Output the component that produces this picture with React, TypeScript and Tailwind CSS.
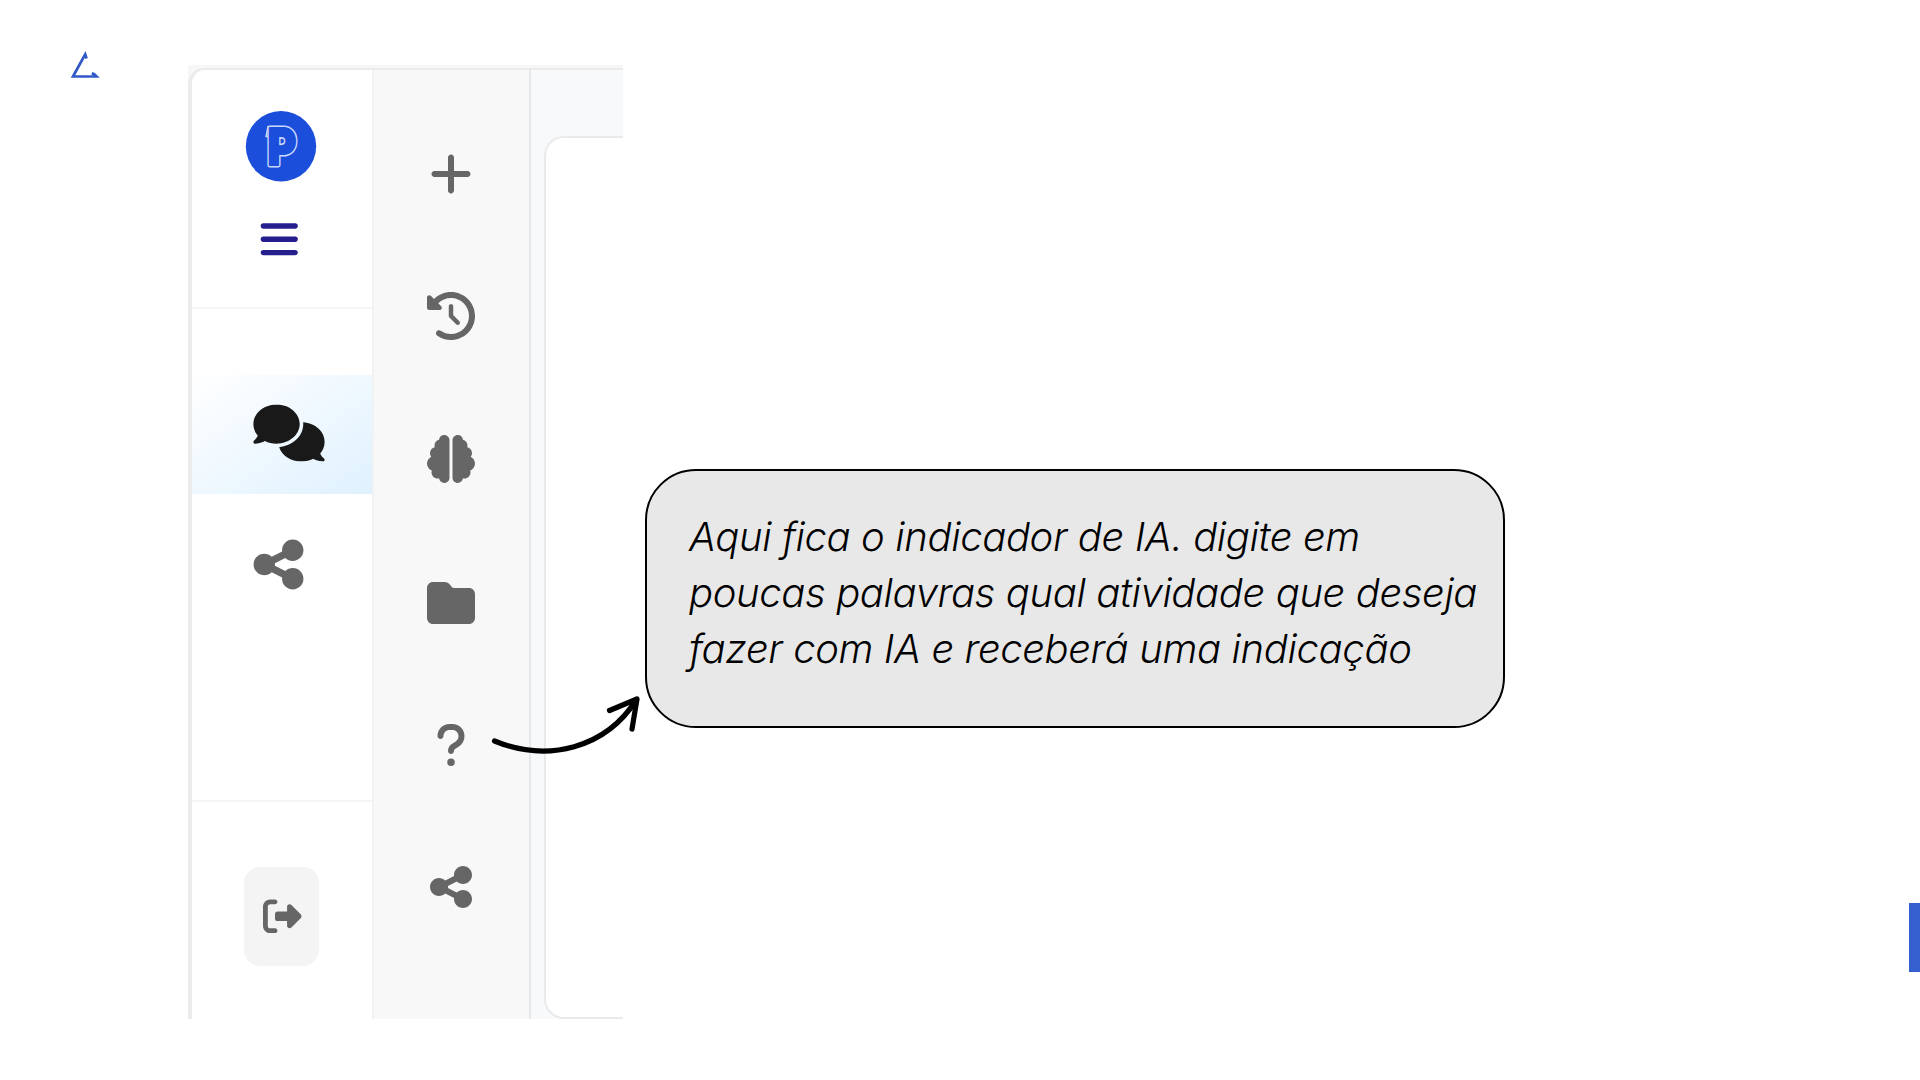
import React from "react";
import {
  FaBars,
  FaBrain,
  FaClockRotateLeft,
  FaComments,
  FaFolder,
  FaPlus,
  FaQuestion,
  FaRightFromBracket,
  FaShareNodes,
} from "react-icons/fa6";

function Triangle() {
  return (
    <svg width="32" height="32" viewBox="0 0 32 32" fill="none" className="ml-[69px] mt-[49px]">
      <path d="M17.6 9.5L16.2 5.4L4 27.5H27.5L25.2 25.2L22.8 24.2" stroke="#3359c9" strokeWidth="2.7" />
    </svg>
  );
}

function Logo() {
  const glyph = {
    transform: "translate(22.4 54.6) scale(0.86 1)",
    fontFamily: "Inter, sans-serif",
    fontWeight: 900,
    fontSize: 51,
    strokeLinejoin: "round" as const,
  };
  return (
    <svg width="72" height="72" viewBox="0 0 72 72" className="mt-[40px] ml-[53px] shrink-0">
      <circle cx="36" cy="36.3" r="35.2" fill="#1b4fdb" />
      <text {...glyph} fill="#1b4fdb" stroke="#c6d6fc" strokeWidth="5.2">
        P
      </text>
      <path d="M23.2 15.9L21.2 26.5H23.6" fill="none" stroke="#c6d6fc" strokeWidth="1.6" />
      <text {...glyph} fill="#1b4fdb" stroke="#1b4fdb" strokeWidth="1.9" aria-hidden="true">
        P
      </text>
    </svg>
  );
}

function PrimarySidebar() {
  return (
    <nav className="flex w-[182px] flex-col rounded-tl-[14px] border-r-2 border-[#f1f2f3] bg-white">
      <div className="flex h-[239px] flex-col border-b-2 border-[#f4f5f6]">
        <Logo />
        <FaBars size={42.5} className="ml-[65.5px] mt-[36px] text-[#241f8c]" />
      </div>
      <div className="mt-[66px] flex h-[119px] items-center bg-linear-to-br from-white to-[#dff1fe] pl-[61px]">
        <FaComments className="h-[57px] w-[72px] -translate-y-[1.5px] text-[#191919]" />
      </div>
      <FaShareNodes size={57} className="ml-[57.5px] mt-[42px] text-[#666666]" />
      <div className="mt-auto flex h-[219px] flex-col border-t-2 border-[#f4f5f6] pl-[52px] pt-[65px]">
        <div className="flex h-[99px] w-[75px] items-center justify-center rounded-[16px] bg-[#f4f4f4] pl-[2px]">
          <FaRightFromBracket size={38.5} className="text-[#666666]" />
        </div>
      </div>
    </nav>
  );
}

function ToolRail() {
  return (
    <nav className="flex w-[157px] flex-col items-center border-r-2 border-[#e6e8eb] bg-[#f8f8f8] pr-[1.5px] pt-[80px] text-[48px] text-[#666666]">
      <FaPlus />
      <FaClockRotateLeft className="mt-[94px]" />
      <FaBrain className="mt-[94.5px]" />
      <FaFolder className="mt-[96px]" />
      <FaQuestion className="mt-[94px]" />
      <FaShareNodes className="mt-[94px]" />
    </nav>
  );
}

export default function App() {
  return (
    <div className="relative flex h-[1080px] w-[1920px] overflow-hidden bg-white">
      <div className="w-[188px] shrink-0">
        <Triangle />
      </div>

      <div className="mt-[65px] flex h-[954px] w-[435px] shrink-0 bg-[#f7f7f7]">
        <div className="mt-[3px] flex grow rounded-tl-[16px] border-l-4 border-t-2 border-[#ebebec]">
          <PrimarySidebar />
          <ToolRail />
          <div className="flex grow bg-[#f7f9fb] pl-[13px] pt-[66px]">
            <div className="grow rounded-l-[20px] border-y-2 border-l-2 border-[#e9eaec] bg-white" />
          </div>
        </div>
      </div>

      <div className="ml-[22px] mt-[469px] h-[259px] w-[860px] shrink-0 rounded-[51px] border-2 border-black bg-[#e8e8e8] pl-[42px] pt-[38px]">
        <p className="whitespace-nowrap font-['Inter',sans-serif] text-[40px] font-light italic leading-[56px] tracking-[-0.38px] text-black">
          Aqui fica o indicador de IA. digite em
          <br />
          poucas palavras qual atividade que deseja
          <br />
          fazer com IA e receberá uma indicação
        </p>
      </div>

      <div className="ml-auto mt-[903px] h-[69px] w-[11.5px] bg-[#355ecf]" />

      <svg
        width="160"
        height="70"
        viewBox="0 0 160 70"
        fill="none"
        stroke="#000"
        strokeWidth="5.2"
        strokeLinecap="round"
        strokeLinejoin="round"
        className="absolute left-[485px] top-[690px]"
      >
        <path d="M9.5 51C63 73 121 58 151.5 9.5" />
        <path d="M124.5 20.5L152 9L147 39" />
      </svg>
    </div>
  );
}
